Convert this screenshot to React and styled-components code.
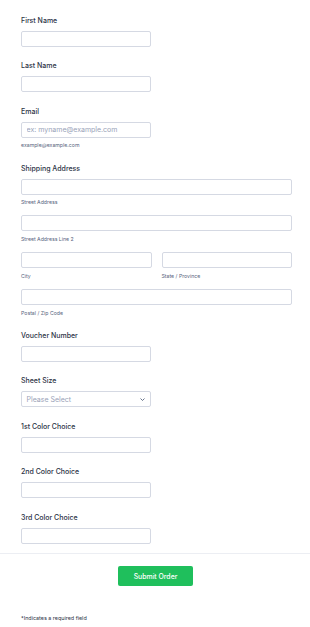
import styled, { createGlobalStyle } from "styled-components";

const GlobalStyle = createGlobalStyle`
  * { box-sizing: border-box; }
  body {
    margin: 0;
    background: #fff;
    font-family: Inter, "Liberation Sans", sans-serif;
  }
`;

function App() {
  return (
    <>
      <GlobalStyle />
      <Form>
        <Fields>
          <Field>
            <Label>First Name</Label>
            <Input half />
          </Field>
          <Field>
            <Label>Last Name</Label>
            <Input half />
          </Field>
          <Field>
            <Label>Email</Label>
            <Input half placeholder="ex: myname@example.com" />
            <SubLabel>example@example.com</SubLabel>
          </Field>
          <Field>
            <Label>Shipping Address</Label>
            <AddressGrid>
              <Cell wide>
                <Input />
                <SubLabel>Street Address</SubLabel>
              </Cell>
              <Cell wide>
                <Input />
                <SubLabel>Street Address Line 2</SubLabel>
              </Cell>
              <Cell>
                <Input />
                <SubLabel>City</SubLabel>
              </Cell>
              <Cell>
                <Input />
                <SubLabel>State / Province</SubLabel>
              </Cell>
              <Cell wide>
                <Input />
                <SubLabel>Postal / Zip Code</SubLabel>
              </Cell>
            </AddressGrid>
          </Field>
          <Field>
            <Label>Voucher Number</Label>
            <Input half />
          </Field>
          <Field>
            <Label>Sheet Size</Label>
            <Select>
              <span>Please Select</span>
              <svg width="5" height="3" viewBox="0 0 5 3">
                <path d="M0.5 0.5 L2.5 2.5 L4.5 0.5" fill="none" stroke="#57647e" strokeWidth="0.9" />
              </svg>
            </Select>
          </Field>
          <Field>
            <Label>1st Color Choice</Label>
            <Input half />
          </Field>
          <Field>
            <Label>2nd Color Choice</Label>
            <Input half />
          </Field>
          <Field>
            <Label>3rd Color Choice</Label>
            <Input half />
          </Field>
        </Fields>
        <Actions>
          <SubmitButton type="button">Submit Order</SubmitButton>
        </Actions>
        <Required>*Indicates a required field</Required>
      </Form>
    </>
  );
}

export default App;

const Form = styled.div`
  width: 310px;
  height: 627px;
  overflow: hidden;
`;

const Fields = styled.div`
  padding: 16px 18px 0 21px;
  display: flex;
  flex-direction: column;
`;

const Field = styled.div`
  display: flex;
  flex-direction: column;
  padding-bottom: 14.4px;
`;

const Label = styled.div`
  font-size: 7px;
  line-height: 9px;
  font-weight: 500;
  color: #2c3345;
  margin-bottom: 6px;
`;

const Input = styled.input`
  display: block;
  width: ${(p) => (p.half ? "130px" : "100%")};
  height: 16px;
  margin: 0;
  padding: 0 4.5px;
  border: 1px solid #d5d9e3;
  border-radius: 2px;
  background: #fff;
  font-family: inherit;
  font-size: 7px;
  color: #2c3345;
  outline: none;
  &::placeholder {
    color: #99a2b8;
  }
`;

const SubLabel = styled.div`
  margin-top: 4.5px;
  font-size: 5.2px;
  line-height: 7px;
  color: #57647e;
`;

const AddressGrid = styled.div`
  display: grid;
  grid-template-columns: 1fr 1fr;
  column-gap: 10px;
  row-gap: 9.3px;
`;

const Cell = styled.div`
  grid-column: ${(p) => (p.wide ? "1 / -1" : "auto")};
`;

const Select = styled.div`
  width: 130px;
  height: 16px;
  border: 1px solid #d5d9e3;
  border-radius: 2px;
  display: flex;
  align-items: center;
  justify-content: space-between;
  padding: 0 5px 0 4.5px;
  font-size: 7px;
  color: #99a2b8;
  svg {
    display: block;
  }
`;

const Actions = styled.div`
  margin-top: -4.5px;
  border-top: 1px solid #eceef3;
  padding-top: 12px;
  display: flex;
  justify-content: center;
`;

const SubmitButton = styled.button`
  width: 75px;
  height: 20px;
  margin: 0 0 0 1px;
  padding: 0;
  border: none;
  border-radius: 2px;
  background: #1fbf5c;
  color: #fff;
  font-family: inherit;
  font-size: 6.9px;
  font-weight: 500;
  cursor: pointer;
`;

const Required = styled.div`
  margin-top: 28.5px;
  padding-left: 21px;
  font-size: 5.4px;
  line-height: 7px;
  color: #2c3345;
`;
